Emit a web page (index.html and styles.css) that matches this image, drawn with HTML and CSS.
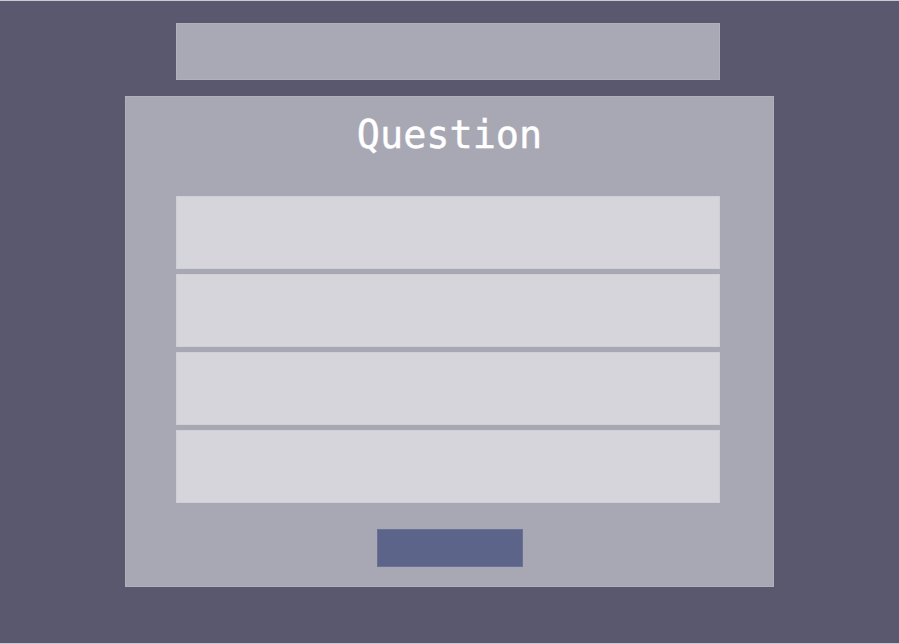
FILE: index.html
```html
<!DOCTYPE html>
<html lang="en">
<head>
    <meta charset="UTF-8">
    <title>Question</title>
    <link rel="stylesheet" href="styles.css">
</head>
<body>
<div class="page">
    <div class="topbar"></div>
    <div class="card">
        <h1 class="title">Question</h1>
        <ul class="answers">
            <li></li>
            <li></li>
            <li></li>
            <li></li>
        </ul>
        <div class="actions">
            <button class="submit"></button>
        </div>
    </div>
</div>
</body>
</html>
```

FILE: styles.css
```css
* {
    padding: 0;
    margin: 0;
    list-style: none;
    border: 0;
    box-sizing: border-box;
}

html, body {
    height: 100%;
}

body {
    background: #5a586f;
    font-family: "DejaVu Sans Mono", "Liberation Mono", monospace;
}

.page {
    height: 644px;
    border-top: 1px solid #c9c8d3;
    border-bottom: 1px solid #c9c8d3;
    padding-top: 22px;
    display: flex;
    flex-direction: column;
    align-items: center;
}

.topbar {
    width: 544px;
    height: 57px;
    background: #a9a9b5;
    border: 1px solid #b1b1bc;
    margin-left: -3px;
}

.card {
    width: 649px;
    margin-top: 16px;
    background: #a8a8b4;
    border: 1px solid #b0b0bb;
    padding-bottom: 19px;
}

.title {
    height: 99px;
    padding-top: 14px;
    font-size: 38.5px;
    font-weight: normal;
    line-height: 48px;
    text-align: center;
    color: #ffffff;
    -webkit-text-stroke: 0.4px #ffffff;
}

.answers {
    width: 544px;
    margin-left: 50px;
    display: flex;
    flex-direction: column;
    gap: 5px;
}

.answers li {
    height: 73px;
    background: #d6d5db;
    border: 1px solid #cfcfd6;
}

.actions {
    display: flex;
    justify-content: center;
    margin-top: 26px;
}

.submit {
    width: 146px;
    height: 38px;
    background: #5c6589;
    border: 1px solid #6a7396;
}
```
